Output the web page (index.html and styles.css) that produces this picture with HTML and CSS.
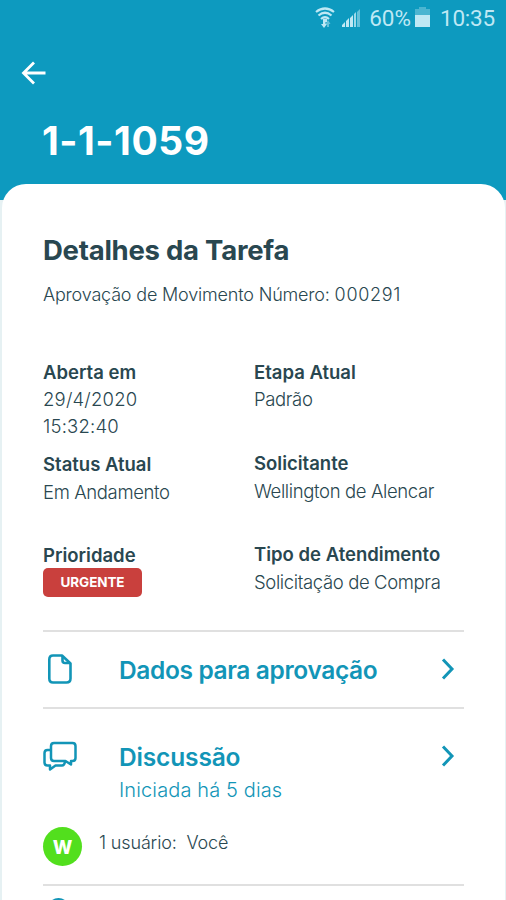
FILE: index.html
```html
<!DOCTYPE html>
<html lang="pt-BR">
<head>
<meta charset="utf-8">
<title>Detalhes da Tarefa</title>
<link rel="stylesheet" href="styles.css">
</head>
<body>
<div class="screen">
  <header class="header">
    <div class="status-bar">
      <svg class="wifi" width="20" height="21" viewBox="0 0 20 21"><g fill="none" stroke="currentColor" stroke-width="2.200"><path d="M1 5Q10-2 19 5"/><path d="M3.500 8.500Q10 3 16.500 8.500"/><path d="M6 12Q10 8.500 14 12"/></g><path d="M8 12h4v3H8zM8 14h2.500v3H12l-3 4-3-4h2z" fill="currentColor"/><path opacity=".5" d="M12 20v-3h-1.500l2.500-4 2.500 4H14v3z" fill="currentColor"/></svg>
      <svg class="signal" width="19" height="18" viewBox="0 0 19 18" fill="currentColor"><path d="M0 18v-2l3-3v5zM4 18v-6l3-3v9zM8 18V9l3-3v12z"/><path opacity=".8" d="M12 18V5l2-2v15z"/><path opacity=".5" d="M15 18V3l3-3v18z"/></svg>
      <span class="percent">60%</span>
      <svg class="battery" width="15" height="20" viewBox="0 0 15 20" fill="currentColor"><path opacity=".35" d="M4 0h7v2h4v7H0V2h4z"/><path d="M0 8h15v12H0z"/></svg>
      <span class="clock">10:35</span>
    </div>
    <svg class="back" width="26" height="24" viewBox="0 0 26 24" fill="none" stroke="currentColor" stroke-width="2.800"><path d="M24.500 12H2.500M13 1.500L2.500 12L13 22.500"/></svg>
    <h1 class="code">1-1-1059</h1>
  </header>
  <main class="sheet">
    <h2 class="title">Detalhes da Tarefa</h2>
    <p class="summary">Aprovação de Movimento Número: <span class="number">000291</span></p>
    <div class="details">
      <dl class="column">
        <div class="field field-first"><dt>Aberta em</dt><dd class="digits">29/4/2020<br>15:32:40</dd></div>
        <div class="field"><dt>Status Atual</dt><dd>Em Andamento</dd></div>
        <div class="field"><dt>Prioridade</dt><dd class="badge">URGENTE</dd></div>
      </dl>
      <dl class="column">
        <div class="field"><dt>Etapa Atual</dt><dd>Padrão</dd></div>
        <div class="field"><dt>Solicitante</dt><dd>Wellington de Alencar</dd></div>
        <div class="field"><dt>Tipo de Atendimento</dt><dd>Solicitação de Compra</dd></div>
      </dl>
    </div>
    <section class="row data-row">
      <svg class="icon" width="34" height="32" viewBox="0 0 34 32" fill="none" stroke="currentColor" stroke-width="2.600" stroke-linejoin="round"><path d="M10 2.500H19L27.500 10.500V25.500Q27.500 29.500 23.500 29.500H10Q6.300 29.500 6.300 25.500V6.500Q6.300 2.500 10 2.500Z"/><path d="M19.500 3V7.500Q19.500 10 22 10H27"/></svg>
      <h3 class="link link-data">Dados para aprovação</h3>
      <svg class="chevron" width="14" height="22" viewBox="0 0 14 22" fill="none" stroke="currentColor" stroke-width="3"><path d="M2 1.500L11 11L2 20.500"/></svg>
    </section>
    <section class="discussion">
      <div class="row talk-row">
        <svg class="icon" width="34" height="32" viewBox="0 0 34 32" fill="none" stroke="currentColor" stroke-width="2.500" stroke-linejoin="round"><path d="M11 2H29.500Q32.500 2 32.500 5V17Q32.500 20 29.500 20H28V23.500L22.500 20H11Q8 20 8 17V5Q8 2 11 2Z"/><path d="M8 9H4.500Q1.500 9 1.500 12V21.500Q1.500 24.500 4.500 24.500H7V28.500L12.500 24.500H19Q21.500 24.500 22 20.500"/></svg>
        <div class="link-group"><h3 class="link">Discussão</h3><p class="since">Iniciada há 5 dias</p></div>
        <svg class="chevron" width="14" height="22" viewBox="0 0 14 22" fill="none" stroke="currentColor" stroke-width="3"><path d="M2 1.500L11 11L2 20.500"/></svg>
      </div>
      <div class="users"><span class="avatar">W</span><span class="people">1 usuário:&nbsp; Você</span></div>
    </section>
    <section class="next-row">
      <svg class="icon" width="34" height="32" viewBox="0 0 34 32" fill="none" stroke="currentColor" stroke-width="2.600"><circle cx="15.500" cy="12" r="9.700"/></svg>
    </section>
  </main>
</div>
</body>
</html>
```
FILE: styles.css
```css
* { box-sizing: border-box; margin: 0; padding: 0; }
body { font-family: Inter, "Liberation Sans", sans-serif; color: #294750; background: #fff; }
.screen { height: 900px; overflow: hidden; display: flex; flex-direction: column; background: linear-gradient(#0d9abf 0 200px, #e6f1f3 200px); }
.header { height: 184px; flex: none; color: #fff; }
.status-bar { height: 38px; display: flex; align-items: flex-start; padding: 7px 11px 0 0; justify-content: flex-end; color: #bfe8f4; font: 400 22.5px/23px Roboto, sans-serif; }
.wifi { margin-right: 7px; }
.signal { margin: 2px 8px 0 0; }
.percent { margin-right: 4px; }
.battery { margin-right: 10px; }
.clock { letter-spacing: -0.2px; }
.back { display: block; margin: 23px 0 0 21px; }
.code { margin: 33px 0 0 42px; font-size: 39px; line-height: 46px; font-weight: 700; letter-spacing: 0.5px; }
.sheet { flex: 1; margin: 0 1px 0 2px; padding: 48px 41px 0 41px; border-radius: 24px 24px 0 0; background: #fff; overflow: hidden; }
.title { font-size: 27.5px; line-height: 36px; font-weight: 700; letter-spacing: -0.25px; }
.summary { margin-top: 15px; font-size: 18px; line-height: 24px; font-weight: 300; letter-spacing: -0.18px; white-space: nowrap; }
.number { letter-spacing: 0.7px; }
.details { display: grid; grid-template-columns: 211px 1fr; height: 271px; margin-top: 52px; }
.column { display: flex; flex-direction: column; }
.field { height: 91px; font-size: 18.5px; line-height: 27px; white-space: nowrap; }
.field-first { height: 92px; }
.field + .field dd { padding-top: 1px; }
dt { font-weight: 600; }
dd { font-weight: 300; letter-spacing: -0.37px; }
.digits { letter-spacing: 0.2px; }
.field + .field .badge { width: 99px; height: 29px; margin-top: -1px; padding: 0; border-radius: 5px; background: #c9403d; color: #fff; font-size: 13.5px; line-height: 29px; font-weight: 700; letter-spacing: -0.1px; text-align: center; }
.row { display: flex; color: #1295b7; }
.data-row { height: 77px; border-top: 2px solid #e0e0e0; padding-top: 21px; }
.icon, .chevron { flex: none; display: block; }
.link { font-size: 24.5px; line-height: 32px; font-weight: 600; letter-spacing: -0.15px; white-space: nowrap; }
.link-data { letter-spacing: -0.37px; padding-top: 1px; }
.data-row .link, .link-group { margin-left: 42px; }
.chevron { margin: 5px 9px 0 auto; }
.talk-row .chevron { margin-top: 4px; }
.discussion { height: 177px; border-top: 2px solid #e0e0e0; padding-top: 32px; }
.since { padding-top: 1px; font-size: 20px; line-height: 32px; font-weight: 300; letter-spacing: 0.12px; }
.users { display: flex; margin-top: 21px; font-size: 18px; font-weight: 300; }
.avatar { width: 39px; height: 39px; border-radius: 50%; background: #52df1d; color: #fff; font-size: 18.5px; line-height: 40px; font-weight: 800; text-align: center; }
.people { margin-left: 17px; line-height: 32px; letter-spacing: -0.15px; }
.next-row { border-top: 2px solid #e0e0e0; padding-top: 11px; color: #1295b7; }
```
